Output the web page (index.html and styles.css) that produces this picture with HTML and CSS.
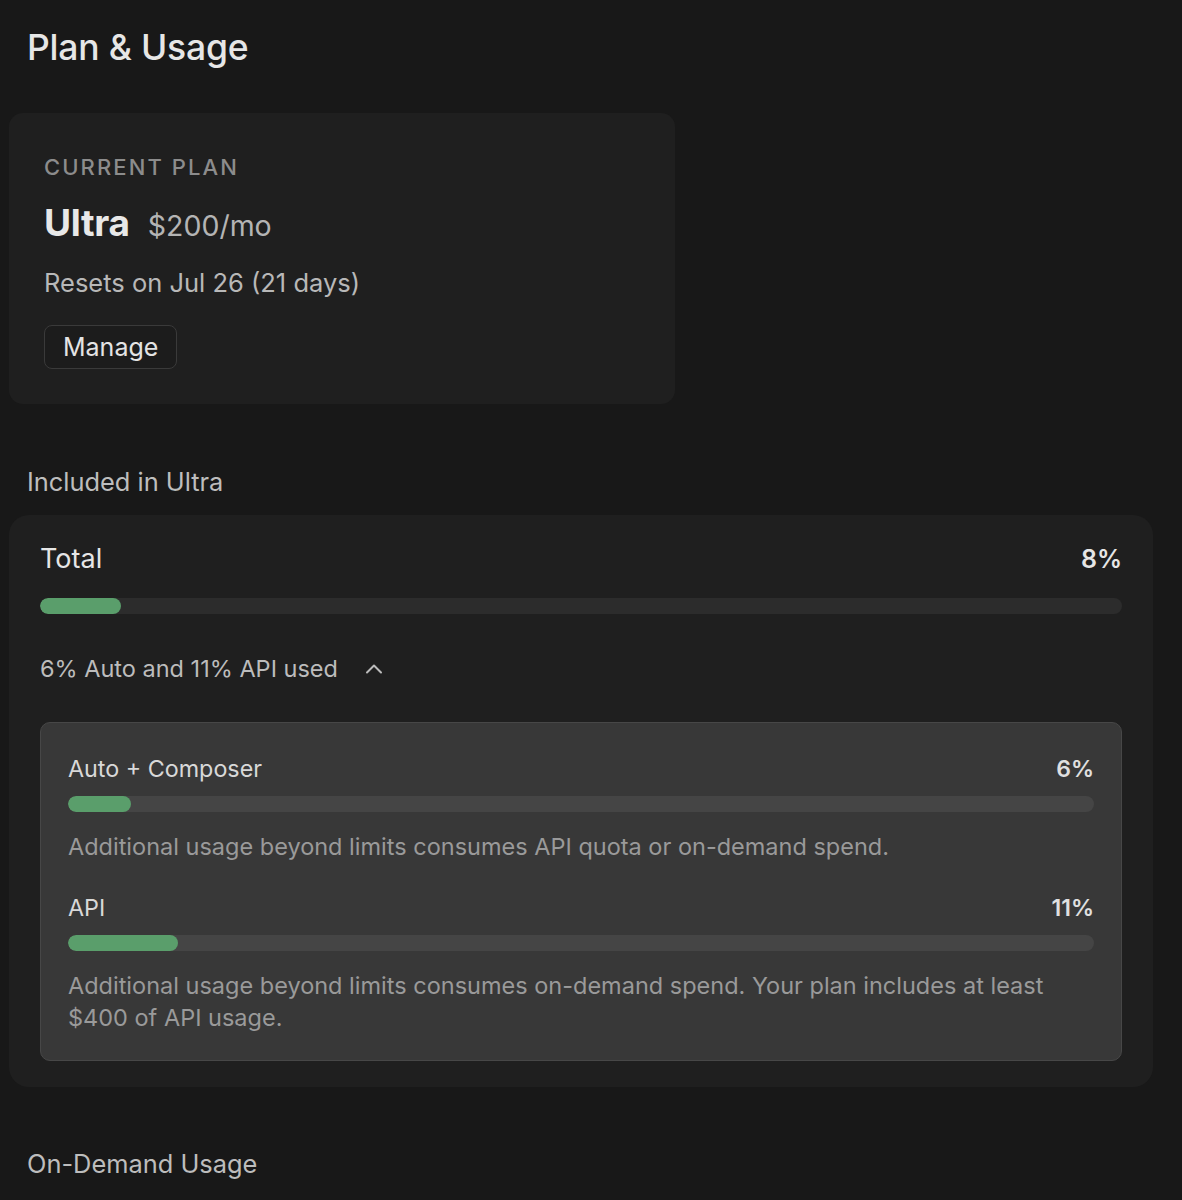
FILE: index.html
```html
<!DOCTYPE html>
<html lang="en">
<head>
<meta charset="utf-8">
<title>Plan &amp; Usage</title>
<link rel="stylesheet" href="styles.css">
</head>
<body>
<main class="page">
  <h1 class="page-title">Plan &amp; Usage</h1>

  <section class="card plan-card">
    <div class="plan-label">CURRENT PLAN</div>
    <div class="plan-name-row">
      <span class="plan-name">Ultra</span>
      <span class="plan-price">$200/mo</span>
    </div>
    <div class="plan-reset">Resets on Jul 26 (21 days)</div>
    <button class="btn">Manage</button>
  </section>

  <h2 class="section-title">Included in Ultra</h2>

  <section class="card usage-card">
    <div class="row">
      <span class="total-label">Total</span>
      <span class="total-pct">8%</span>
    </div>
    <div class="bar total-bar"><div class="fill" style="width:7.5%"></div></div>

    <div class="breakdown-toggle">
      <span>6% Auto and 11% API used</span>
      <svg class="chevron" width="18" height="12" viewBox="0 0 18 12" aria-hidden="true">
        <path d="M2 9.5 L9 2.5 L16 9.5" fill="none" stroke="currentColor" stroke-width="2" stroke-linecap="round" stroke-linejoin="round"/>
      </svg>
    </div>

    <div class="breakdown">
      <div class="item">
        <div class="row">
          <span class="item-label">Auto + Composer</span>
          <span class="item-pct">6%</span>
        </div>
        <div class="bar inner-bar"><div class="fill" style="width:6.1%"></div></div>
        <p class="item-desc">Additional usage beyond limits consumes API quota or on-demand spend.</p>
      </div>
      <div class="item">
        <div class="row">
          <span class="item-label">API</span>
          <span class="item-pct">11%</span>
        </div>
        <div class="bar inner-bar"><div class="fill" style="width:10.7%"></div></div>
        <p class="item-desc">Additional usage beyond limits consumes on-demand spend. Your plan includes at least $400 of API usage.</p>
      </div>
    </div>
  </section>

  <h2 class="section-title ondemand">On-Demand Usage</h2>
</main>
</body>
</html>
```

FILE: styles.css
```css
html, body {
  margin: 0;
  padding: 0;
  background: #181818;
}

body {
  font-family: Inter, "Noto Sans", "Liberation Sans", sans-serif;
  color: #e4e4e4;
  -webkit-font-smoothing: antialiased;
}

.page {
  padding: 28px 29px 0 9px;
}

.page-title {
  margin: 0 0 0 18px;
  font-size: 35.5px;
  line-height: 40px;
  font-weight: 500;
  color: #e6e6e6;
  letter-spacing: -0.2px;
}

.card {
  background: #1f1f1f;
}

.plan-card {
  width: 666px;
  box-sizing: border-box;
  margin-top: 45px;
  padding: 40px 35px 35px;
  border-radius: 14px;
}

.plan-label {
  font-size: 22px;
  line-height: 28px;
  letter-spacing: 2.1px;
  font-weight: 500;
  color: #8c8c8c;
}

.plan-name-row {
  margin-top: 20px;
  display: flex;
  align-items: baseline;
  gap: 18px;
  line-height: 44px;
}

.plan-name {
  font-size: 37px;
  font-weight: 700;
  color: #e8e8e8;
  letter-spacing: -0.3px;
}

.plan-price {
  font-size: 28.5px;
  color: #b4b4b4;
}

.plan-reset {
  margin-top: 19px;
  font-size: 25.5px;
  line-height: 32px;
  color: #b8b8b8;
}

.btn {
  margin-top: 26px;
  display: block;
  height: 44px;
  padding: 0 18px;
  font: inherit;
  font-size: 25px;
  color: #e4e4e4;
  background: #1c1c1c;
  border: 1px solid #3a3a3a;
  border-radius: 8px;
}

.section-title {
  margin: 62px 0 0 18px;
  font-size: 25.4px;
  line-height: 32px;
  font-weight: 400;
  color: #bdbdbd;
}

.usage-card {
  margin-top: 17px;
  padding: 26px 31px 26px;
  border-radius: 20px;
}

.row {
  display: flex;
  justify-content: space-between;
  align-items: baseline;
}

.total-label {
  font-size: 27px;
  line-height: 36px;
  color: #e6e6e6;
}

.total-pct {
  font-size: 25px;
  font-weight: 600;
  color: #e6e6e6;
}

.bar {
  height: 16px;
  border-radius: 8px;
  overflow: hidden;
}

.fill {
  height: 100%;
  background: #5a9e6b;
  border-radius: 8px;
}

.total-bar {
  margin-top: 21px;
  background: #2c2c2c;
}

.breakdown-toggle {
  margin-top: 39px;
  display: flex;
  align-items: center;
  gap: 27px;
  font-size: 23.5px;
  line-height: 32px;
  color: #bcbcbc;
}

.chevron {
  color: #bcbcbc;
}

.breakdown {
  margin-top: 37px;
  background: #383838;
  border: 1px solid #474747;
  border-radius: 10px;
  padding: 30px 27px 26px;
}

.item + .item {
  margin-top: 29px;
}

.item-label {
  font-size: 23.3px;
  line-height: 32px;
  color: #d8d8d8;
}

.item-pct {
  font-size: 23px;
  font-weight: 600;
  color: #e0e0e0;
}

.inner-bar {
  margin-top: 11px;
  background: #454545;
}

.item-desc {
  margin: 19px 0 0;
  font-size: 23.5px;
  line-height: 32px;
  color: #9a9a9a;
}

.ondemand {
  margin-top: 61px;
}
```
